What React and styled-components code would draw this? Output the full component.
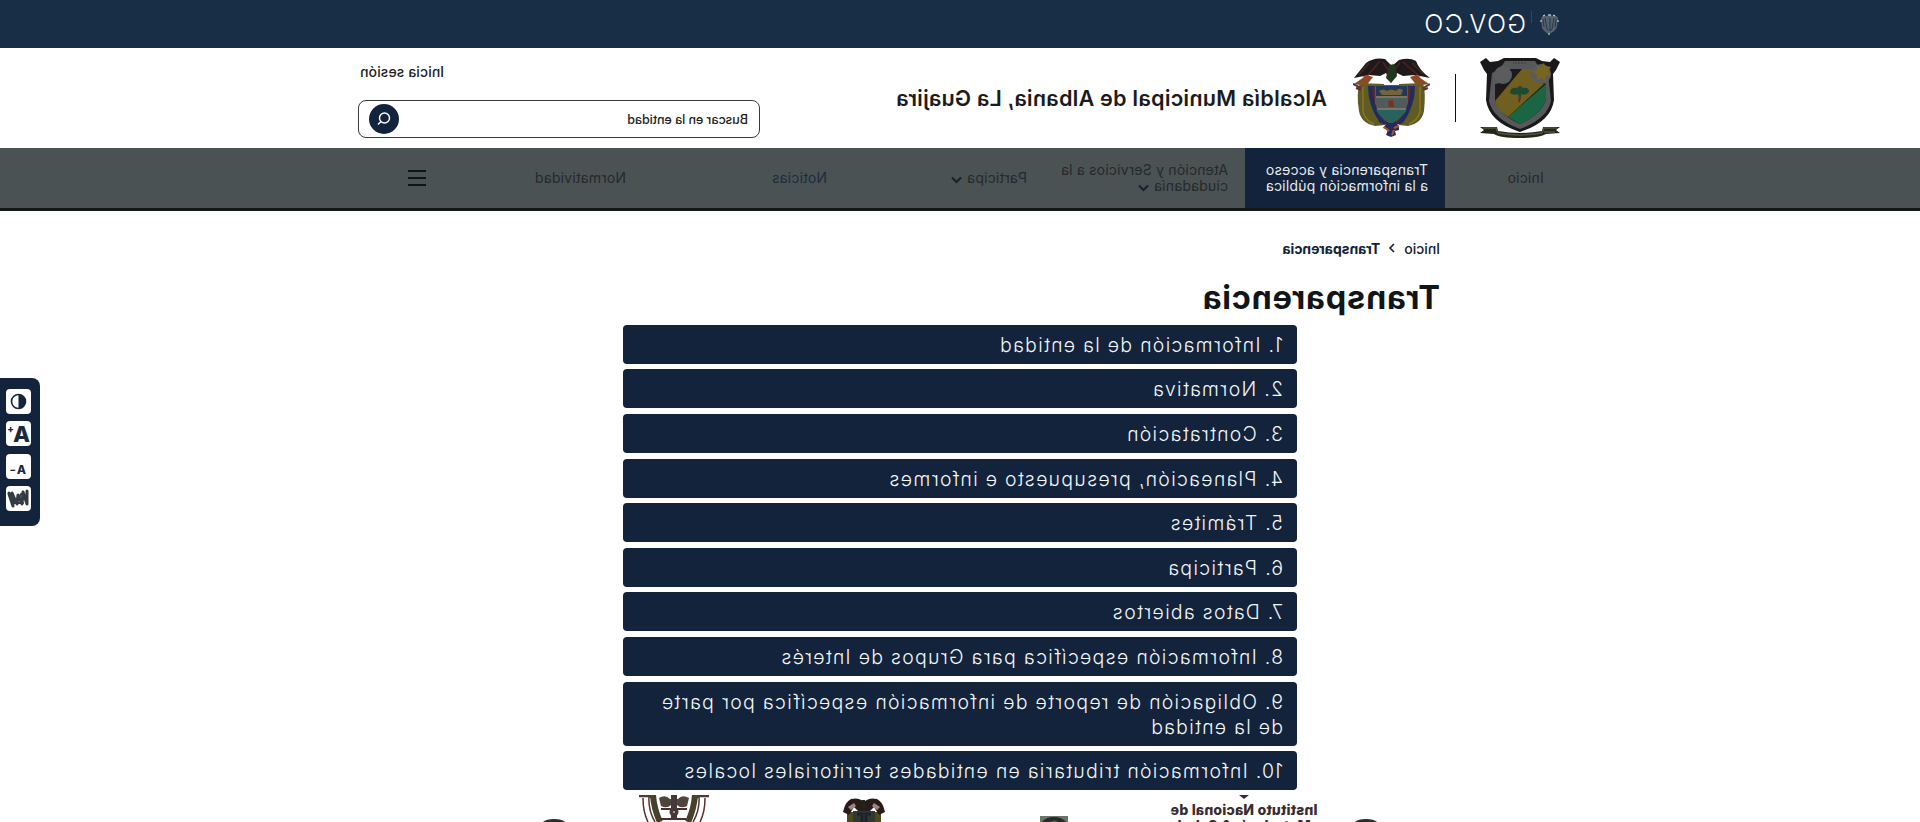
import React from 'react';
import styled, { createGlobalStyle } from 'styled-components';

const Global = createGlobalStyle`
  *{box-sizing:border-box}
  body{margin:0;background:#fff;overflow:hidden;font-family:Inter,"Liberation Sans",sans-serif;color:#17191c}
  ul,h1{margin:0;padding:0;list-style:none}
`;
const Page = styled.div`
  position:relative;width:1920px;height:822px;overflow:hidden;background:#fff;
  transform:scaleX(-1);display:flex;flex-direction:column;
`;
const TopBar = styled.div`
  height:48px;flex:none;background:#182e46;padding-left:361px;display:flex;align-items:center;color:#fff;
`;
const GovMark = styled.span`
  margin-left:5px;font:300 25px/48px Inter,sans-serif;letter-spacing:1.5px;
`;
const Bar = styled.i`width:1px;height:12px;margin:-14px 0 0 8px;background:#3d4a35;`;
const Header = styled.header`
  height:100px;flex:none;display:flex;padding:10px 358px 0 360px;
`;
const Divider = styled.i`width:1px;height:48px;margin:16px 25px 0 24px;background:#111;`;
const Title = styled.div`
  margin:26px 0 0 26px;font-size:21.5px;font-weight:600;line-height:28px;white-space:nowrap;
  letter-spacing:0.25px;color:#1b1b1e;
`;
const Tools = styled.div`margin-left:auto;width:402px;display:flex;flex-direction:column;`;
const Login = styled.div`
  align-self:flex-end;margin-right:2px;padding-top:4px;height:32px;font-size:14px;font-weight:500;line-height:20px;
  letter-spacing:0.1px;margin-bottom:10px;color:#222;
`;
const Search = styled.div`
  height:38px;border:1px solid #383c40;border-radius:8px;display:flex;align-items:center;
  justify-content:space-between;padding:0 10px 0 11px;font-size:12.5px;font-weight:500;color:#222;letter-spacing:-0.05px;
`;
const SearchButton = styled.span`
  width:30px;height:30px;border-radius:50%;background:#12243d;display:flex;align-items:center;justify-content:center;
`;
const Nav = styled.nav`
  height:63px;flex:none;background:#4b5254;border-bottom:3px solid #141718;display:flex;padding-left:314px;
`;
const NavItem = styled.div`
  width:${p => p.$w}px;padding-left:${p => p.$pad || 0}px;display:flex;align-items:center;
  justify-content:${p => (p.$pad ? 'flex-start' : 'center')};
  background:${p => (p.$active ? '#12233b' : 'transparent')};
  color:${p => (p.$active ? '#e6ebf0' : p.$blue ? '#1d2b3d' : '#25292b')};
  font-size:14px;line-height:16px;white-space:nowrap;letter-spacing:0.2px;
  svg{margin-left:5px;vertical-align:-1px}
`;
const Main = styled.main`flex:none;padding:27px 0 0 480px;`;
const Crumbs = styled.div`
  display:flex;align-items:center;height:20px;font-size:14px;font-weight:500;color:#17202b;
  b{font-weight:700;letter-spacing:-0.05px;color:#12233b}
  svg{margin:0 8px 0 9px}
`;
const Heading = styled.h1`
  height:66.8px;padding-top:18px;font-size:32.5px;line-height:44px;font-weight:700;letter-spacing:0.75px;color:#111518;
`;
const List = styled.ul`
  width:674px;margin-left:143px;display:flex;flex-direction:column;gap:5.6px;
`;
const Entry = styled.li`
  min-height:39px;padding:8px 13px 6px 14px;border-radius:4px;background:#12233b;color:#f3f6f8;
  font-size:19.4px;font-weight:300;line-height:25px;letter-spacing:1.32px;
`;
const Footer = styled.footer`
  height:27px;margin-top:5px;flex:none;overflow:hidden;display:flex;padding-left:542px;
`;
const Institute = styled.div`
  width:164px;margin:0 -4px 0 28px;color:#382d30;font-size:14px;font-weight:800;line-height:16px;letter-spacing:0.2px;
  white-space:nowrap;text-align:center;
  svg{display:block;margin:0 auto 3px 77px}
`;
const Slot = styled.div`
  width:${p => p.$w}px;margin-left:${p => p.$gap}px;padding-top:${p => p.$top || 0}px;flex:none;
  svg{display:block}
`;
const Access = styled.aside`
  position:absolute;right:0;top:378px;width:40px;height:148px;border-radius:8px 0 0 8px;background:#12233b;
  display:flex;flex-direction:column;align-items:flex-end;gap:7.3px;padding:11px 6px 0 0;
`;
const AccessButton = styled.span`
  width:25px;height:25px;flex:none;border-radius:4px;background:#fff;color:#1b2a3c;display:flex;
  align-items:${p => p.$align || 'center'};justify-content:center;overflow:hidden;
  font-size:${p => p.$size || 12}px;font-weight:800;line-height:1;
  span{padding-bottom:3px}
  sup{font-size:10px;line-height:1;align-self:${p => (p.$align ? 'center' : 'flex-start')};margin:${p => (p.$align ? '6px 0 0 1px' : '3px 0 0 -1px')}}
`;
const Minus = styled.sup`transform:scaleX(1.4);transform-origin:left;`;

const Chevron = ({ side }) => (
  <svg width={side ? 7 : 11} height={side ? 10 : 8} viewBox={side ? '0 0 7 10' : '0 0 11 8'} fill="none" stroke="#17202b" strokeWidth={side ? 1.6 : 2}>
    <path d={side ? 'M1 1l4 4-4 4' : 'M1 1.5l4.5 4.5L10 1.5'} />
  </svg>
);

const GovCrest = () => (
  <svg width="19" height="22" viewBox="0 0 19 22">
    <path d="M1 5Q3 1 7 3L9 1L12 3Q17 1 18 6L17 15Q14 20 10 21Q4 19 2 14Z" fill="#54616d" />
    <path d="M5 5l2 11 2 2V5M14 5l-2 11-2 2M3 6l1 8M16 6l-1 8" stroke="#27384b" fill="none" />
    <path d="M4 3l2-1M8 2h3M14 2l2 1M1 7v2M18 7v2M9 21h2" stroke="#e5e9ef" />
  </svg>
);

const MunicipalShield = () => (
  <svg width="80" height="80" viewBox="0 0 80 80">
    <path d="M0 4L6 0L10 4L18 3L24 0H56L62 3L70 4L74 0L80 4L76 12L73 16L74 42Q71 64 40 74Q9 64 6 42L7 16L4 12Z" fill="#19191b" />
    <path d="M12 15Q20 12 25 3H55Q60 12 68 15L71 43Q67 61 40 71Q13 61 9 43Z" fill="#57585a" />
    <g transform="matrix(-1 0 0 1 80 0)">
      <path d="M15 26Q27 25 29 11H53Q54 23 66 26V41Q62 56 40 66Q20 57 15 43Z" fill="#1c1a1c" />
      <path d="M15 43L42 11H53Q54 23 64 26L28 59Q17 52 15 43Z" fill="#715f20" />
      <path d="M28 59L66 26V41Q62 56 40 66Z" fill="#1c6543" />
    </g>
    <circle cx="19" cy="16" r="10" fill="#5b5b5c" />
    <path d="M17 5l2 4 4-2v5l4 2-4 3v5l-4-2-4 3-1-5-5-1 3-4-3-4 5-1Z" fill="#766622" />
    <circle cx="57" cy="17" r="9" fill="#5c5c5e" />
    <path d="M31 34q0-5 6-4 3-4 6 0 7-1 7 5-4 3-8 1l-1 5h-2v-5q-5 2-8-2Z" fill="#1e4b2d" />
    <path d="M40 38l1 6" stroke="#64321d" strokeWidth="2" />
    <path d="M34 5h13" stroke="#3b3b3d" strokeDasharray="2 1" />
    <path d="M0 69L17 69L18 73Q40 77 62 73L63 69H80L76 72L80 75L66 76Q60 80 40 80Q20 80 14 76L0 75L4 72Z" fill="#222719" />
    <path d="M3 70h13l2 5q22 4 44 0l2-5h13M5 74h11" fill="none" stroke="#505438" strokeWidth="1.3" />
  </svg>
);

const NationalCrest = ({ width = 77, height = 80 }) => (
  <svg width={width} height={height} viewBox="0 0 77 80">
    <path d="M7 25Q4 34 6 53Q8 65 22 68L31 67L31 26ZM70 25Q74 35 71 53Q69 65 55 68L45 67L46 26Z" fill="#5f5b25" />
    <path d="M15 28Q15 48 27 65L37 68V28ZM62 28Q62 48 50 65L40 68V28Z" fill="#242a5c" />
    <path d="M21 29Q21 49 34 64M56 29Q56 49 43 64" fill="none" stroke="#5c292b" strokeWidth="3" />
    <path d="M10 29v25q3 9 11 12M67 29v25q-3 9-11 12" fill="none" stroke="#8c7425" strokeWidth="1.5" />
    <path d="M22 27H55V45Q52 58 39 66Q25 58 22 45Z" fill="#515b5c" />
    <path d="M23 28H54V38H23Z" fill="#20395a" />
    <path d="M23 52H54Q50 60 39 66Q28 60 23 52Z" fill="#28615e" />
    <path d="M23 39H54M24 51H53" stroke="#9b9175" />
    <path d="M27 32q4-3 7 1 5-3 9 0 4-3 8 0l-3 4H29Z" fill="#736539" />
    <path d="M36 49l1-7 5 1-1 6Z" fill="#793027" />
    <path d="M0 20Q11 12 14 3Q21-1 31 2L38 8L45 1Q56-1 64 5L76 20L61 17L50 18L44 15L39 25L33 15L27 18L15 17Z" fill="#211819" />
    <path d="M7 16L18 5M12 17L27 4M61 5L71 17M50 3L62 17M30 4l7 11M47 4l-7 11" stroke="#442724" strokeWidth="1.5" />
    <path d="M35 6l6 1 3 13-5 5-6-7Z" fill="#20361d" />
    <path d="M1 26l13-9 6 2-7 9ZM76 26l-13-9-6 2 7 9Z" fill="#81502a" />
    <path d="M9 19l6-2 2 4ZM68 19l-6-2-2 4Z" fill="#b43421" />
    <path d="M0 26l7 4M2 30l5 2M77 26l-8 4M74 30l-5 2" stroke="#5c342c" strokeWidth="2" />
    <path d="M31 68l5-3h7l4 5-5 2 2 5-5 2-5-2 1-4-4-1Z" fill="#29285a" />
    <path d="M31 68l5 2M36 72l2 5M46 69l-5 4" stroke="#a65730" strokeWidth="2" />
  </svg>
);

const SealCrest = () => (
  <svg width="42" height="24" viewBox="0 0 42 24">
    <path d="M4 14H38V24H4Z" fill="#4a4a20" />
    <path d="M10 13H32V24H10Z" fill="#30392f" />
    <path d="M14 16h5v8M28 16h-5v8" stroke="#1d2230" strokeWidth="3" fill="none" />
    <path d="M0 14Q2 4 8 1Q16-1 21 4Q26-1 34 1Q40 4 42 14L36 17L31 9L27 13H15L11 9L6 17Z" fill="#291b19" />
    <path d="M5 9l6-4 2 3-5 4ZM37 9l-6-4-2 3 5 4Z" fill="#9b8781" />
    <path d="M20 2h3l1 8h-5Z" fill="#1c261a" />
  </svg>
);

const OutlineCrest = () => (
  <svg width="70" height="27" viewBox="0 0 70 27" fill="none">
    <path d="M0 1h11l4 4M70 1H59l-4 4" stroke="#454037" strokeWidth="2.5" />
    <path d="M4 3q0 14 5 24M66 3q0 14-5 24M10 1q-1 14 6 26M60 1q1 14-6 26" stroke="#5b332c" strokeWidth="1.5" />
    <path d="M14 0q1 14 7 27M56 0q-1 14-7 27" stroke="#45412a" strokeWidth="6" />
    <path d="M20 3q7-4 11 1h8q5-5 11-1l-2 8q-6 3-10-1h-6q-4 4-10 1Z" fill="#50443f" />
    <path d="M22 14h26M23 24h25" stroke="#542c2a" strokeWidth="2" />
    <path d="M35 0v24" stroke="#45393a" strokeWidth="6" />
    <circle cx="35" cy="17" r="4.5" fill="#45393a" /><circle cx="35" cy="17" r="1" fill="#bbb" />
  </svg>
);

const Dome = () => (
  <svg width="24" height="4" viewBox="0 0 24 4"><path d="M0 4Q3 0 12 0T24 4Z" fill="#2b2c30" /></svg>
);

const SmallPortrait = () => (
  <svg width="28" height="6" viewBox="0 0 28 6">
    <path d="M0 0h28v6H0Z" fill="#68766a" /><path d="M2 6Q6 1 14 1T26 6Z" fill="#2a292a" /><path d="M10 6q4-3 8 0" fill="#55605a" />
  </svg>
);

const ReliefIcon = () => (
  <svg width="25" height="25" viewBox="0 0 25 25" fill="none" stroke="#333b43" strokeWidth="3" strokeLinejoin="round" strokeLinecap="round">
    <path d="M4 5v13l4-12 1 12 4-9 1 9 5-11-1 13 4-12V7" />
    <path d="M5 11l12 4M8 17h11M10 8l4 8" strokeWidth="2" />
  </svg>
);

const entries = [
  '1. Información de la entidad', '2. Normativa', '3. Contratación',
  '4. Planeación, presupuesto e informes', '5. Trámites', '6. Participa', '7. Datos abiertos',
  '8. Información específica para Grupos de Interés',
  '9. Obligación de reporte de información específica por parte de la entidad',
  '10. Información tributaria en entidades territoriales locales',
];

export default function App() {
  return (
    <Page>
      <Global />
      <TopBar><GovCrest /><Bar /><GovMark>GOV.CO</GovMark></TopBar>
      <Header>
        <MunicipalShield /><Divider /><NationalCrest />
        <Title>Alcaldía Municipal de Albania, La Guajira</Title>
        <Tools>
          <Login>Inicia sesión</Login>
          <Search>
            Buscar en la entidad
            <SearchButton>
              <svg width="14" height="14" viewBox="0 0 14 14" fill="none" stroke="#fff" strokeWidth="1.4"><circle cx="6.5" cy="6" r="5" /><path d="M10 9.5l3 3" /></svg>
            </SearchButton>
          </Search>
        </Tools>
      </Header>
      <Nav>
        <NavItem $w={161}>Inicio</NavItem>
        <NavItem $w={200} $pad={17} $active>Transparencia y acceso<br />a la información pública</NavItem>
        <NavItem $w={201} $pad={17}><span>Atención y Servicios a la<br />ciudadanía<Chevron /></span></NavItem>
        <NavItem $w={200} $pad={17}><span>Participa<Chevron /></span></NavItem>
        <NavItem $w={89} $pad={17} $blue>Noticias</NavItem>
        <NavItem $w={329} $pad={129}>Normatividad</NavItem>
        <svg width="18" height="60" viewBox="0 0 18 60" stroke="#101416" strokeWidth="2"><path d="M0 23h18M0 30h18M0 37h18" /></svg>
      </Nav>
      <Main>
        <Crumbs>Inicio<Chevron side /><b>Transparencia</b></Crumbs>
        <Heading>Transparencia</Heading>
        <List>{entries.map(t => <Entry key={t}>{t}</Entry>)}</List>
      </Main>
      <Footer>
        <Slot $w={24} $gap={0} $top={24}><Dome /></Slot>
        <Institute>
          <svg width="10" height="4" viewBox="0 0 10 4"><path d="M0 0h10L5 4Z" fill="#382d30" /></svg>
          Instituto Nacional de<br />Metrología &amp; Salud
        </Institute>
        <Slot $w={28} $gap={98} $top={21}><SmallPortrait /></Slot>
        <Slot $w={42} $gap={155} $top={3}><SealCrest /></Slot>
        <Slot $w={70} $gap={134}><OutlineCrest /></Slot>
        <Slot $w={24} $gap={73} $top={24}><Dome /></Slot>
      </Footer>
      <Access>
        <AccessButton><svg width="25" height="25" viewBox="0 0 25 25"><circle cx="12.5" cy="12.5" r="7" fill="none" stroke="#12233b" strokeWidth="1.6" /><path d="M12.5 5.5a7 7 0 0 0 0 14Z" fill="#12233b" /></svg></AccessButton>
        <AccessButton $size={22}>A<sup>+</sup></AccessButton>
        <AccessButton $size={12} $align="flex-end"><span>A</span><Minus>-</Minus></AccessButton>
        <AccessButton><ReliefIcon /></AccessButton>
      </Access>
    </Page>
  );
}
